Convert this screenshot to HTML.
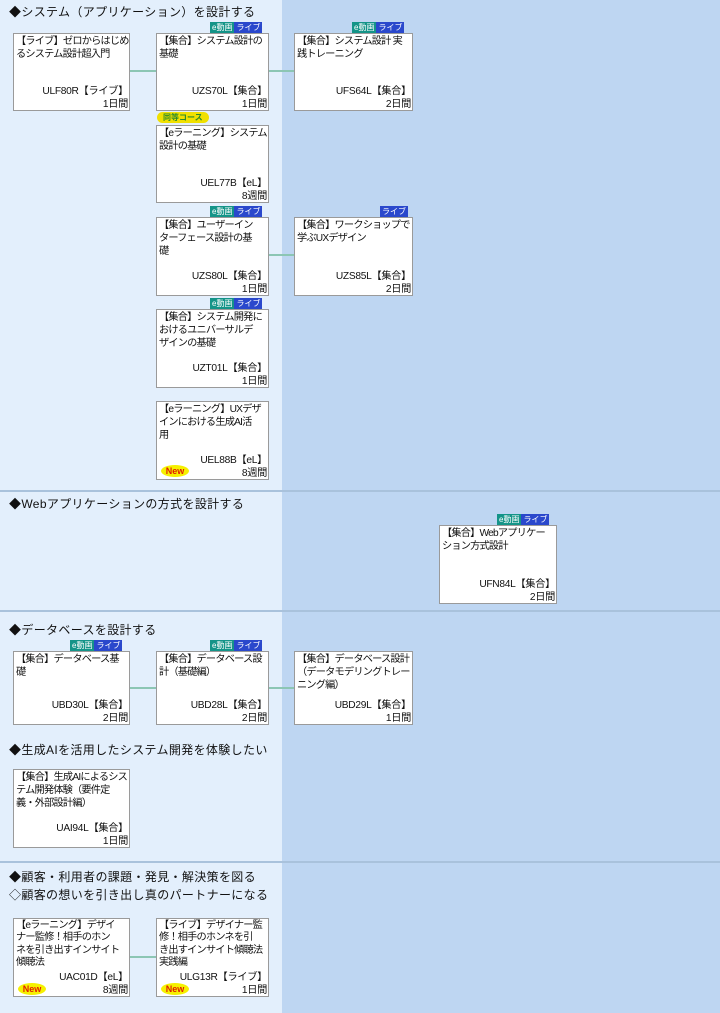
<!DOCTYPE html>
<html><head><meta charset="utf-8"><style>
*{margin:0;padding:0;box-sizing:border-box}
body{width:720px;height:1013px;position:relative;overflow:hidden;background:#bed6f2;font-family:"Liberation Sans","Noto Sans CJK JP",sans-serif;color:#111}
.left{position:absolute;left:0;top:0;width:282px;height:1013px;background:#e3effc}
.hr{position:absolute;left:0;width:720px;height:2px;background:#a9c2dc}
.h{position:absolute;left:9px;font-size:12px;letter-spacing:0.35px;white-space:nowrap;line-height:16px}
.b{position:absolute;background:#fff;border:1px solid #9a9a9a;font-size:10.2px;letter-spacing:-0.8px;line-height:13px;padding:1px 1px 0 2px;white-space:nowrap;overflow:hidden}
.b .c{position:absolute;right:1px;bottom:-1px;text-align:right;line-height:13px;letter-spacing:-0.3px}
.b.t{line-height:12.4px}
.b.t .c{line-height:12.4px}
.bd{position:absolute;height:11px;font-size:8px;line-height:11px;color:#fff;white-space:nowrap;display:flex}
.bd span{padding:0 2px}
.e{background:#149488}.l{background:#2a48cc}
.cn{position:absolute;height:2px;background:#8cc6b4}
.new{position:absolute;width:28px;height:12px;border-radius:50%;background:#f5f000;color:#e02000;font-size:9px;font-weight:bold;line-height:12px;text-align:center}
.pill{position:absolute;background:#f0e000;border-radius:6px;color:#2a8a2a;font-size:8px;line-height:11px;padding:0 6px;font-weight:bold}
</style></head><body>
<div class="left"></div>
<div class="hr" style="top:490px"></div>
<div class="hr" style="top:610px"></div>
<div class="hr" style="top:861px"></div>

<div class="h" style="top:4px">◆システム（アプリケーション）を設計する</div>
<div class="h" style="top:496px">◆Webアプリケーションの方式を設計する</div>
<div class="h" style="top:622px">◆データベースを設計する</div>
<div class="h" style="top:742px">◆生成AIを活用したシステム開発を体験したい</div>
<div class="h" style="top:869px">◆顧客・利用者の課題・発見・解決策を図る</div>
<div class="h" style="top:887px">◇顧客の想いを引き出し真のパートナーになる</div>

<div class="cn" style="left:130px;top:70px;width:26px"></div>
<div class="cn" style="left:268px;top:70px;width:26px"></div>
<div class="cn" style="left:268px;top:254px;width:26px"></div>
<div class="cn" style="left:130px;top:687px;width:26px"></div>
<div class="cn" style="left:268px;top:687px;width:26px"></div>
<div class="cn" style="left:130px;top:956px;width:26px"></div>

<div class="b" style="left:13px;top:33px;width:117px;height:78px">【ライブ】ゼロからはじめ<br>るシステム設計超入門<div class="c">ULF80R【ライブ】<br>1日間</div></div>
<div class="bd" style="left:210px;top:22px"><span class="e">e動画</span><span class="l">ライブ</span></div>
<div class="b" style="left:156px;top:33px;width:113px;height:78px">【集合】システム設計の<br>基礎<div class="c">UZS70L【集合】<br>1日間</div></div>
<div class="bd" style="left:352px;top:22px"><span class="e">e動画</span><span class="l">ライブ</span></div>
<div class="b" style="left:294px;top:33px;width:119px;height:78px">【集合】システム設計 実<br>践トレーニング<div class="c">UFS64L【集合】<br>2日間</div></div>

<div class="pill" style="left:157px;top:112px">同等コース</div>
<div class="b" style="left:156px;top:125px;width:113px;height:78px">【eラーニング】システム<br>設計の基礎<div class="c">UEL77B【eL】<br>8週間</div></div>

<div class="bd" style="left:210px;top:206px"><span class="e">e動画</span><span class="l">ライブ</span></div>
<div class="b" style="left:156px;top:217px;width:113px;height:79px">【集合】ユーザーイン<br>ターフェース設計の基<br>礎<div class="c">UZS80L【集合】<br>1日間</div></div>
<div class="bd" style="left:380px;top:206px"><span class="l">ライブ</span></div>
<div class="b" style="left:294px;top:217px;width:119px;height:79px">【集合】ワークショップで<br>学ぶUXデザイン<div class="c">UZS85L【集合】<br>2日間</div></div>

<div class="bd" style="left:210px;top:298px"><span class="e">e動画</span><span class="l">ライブ</span></div>
<div class="b" style="left:156px;top:309px;width:113px;height:79px">【集合】システム開発に<br>おけるユニバーサルデ<br>ザインの基礎<div class="c">UZT01L【集合】<br>1日間</div></div>

<div class="b" style="left:156px;top:401px;width:113px;height:79px">【eラーニング】UXデザ<br>インにおける生成AI活<br>用<div class="c">UEL88B【eL】<br>8週間</div></div>
<div class="new" style="left:161px;top:465px">New</div>

<div class="bd" style="left:497px;top:514px"><span class="e">e動画</span><span class="l">ライブ</span></div>
<div class="b" style="left:439px;top:525px;width:118px;height:79px">【集合】Webアプリケー<br>ション方式設計<div class="c">UFN84L【集合】<br>2日間</div></div>

<div class="bd" style="left:70px;top:640px"><span class="e">e動画</span><span class="l">ライブ</span></div>
<div class="b" style="left:13px;top:651px;width:117px;height:74px">【集合】データベース基<br>礎<div class="c">UBD30L【集合】<br>2日間</div></div>
<div class="bd" style="left:210px;top:640px"><span class="e">e動画</span><span class="l">ライブ</span></div>
<div class="b" style="left:156px;top:651px;width:113px;height:74px">【集合】データベース設<br>計（基礎編）<div class="c">UBD28L【集合】<br>2日間</div></div>
<div class="b" style="left:294px;top:651px;width:119px;height:74px">【集合】データベース設計<br>（データモデリングトレー<br>ニング編）<div class="c">UBD29L【集合】<br>1日間</div></div>

<div class="b" style="left:13px;top:769px;width:117px;height:79px">【集合】生成AIによるシス<br>テム開発体験（要件定<br>義・外部設計編）<div class="c">UAI94L【集合】<br>1日間</div></div>

<div class="b t" style="left:13px;top:918px;width:117px;height:79px">【eラーニング】デザイ<br>ナー監修！相手のホン<br>ネを引き出すインサイト<br>傾聴法<div class="c">UAC01D【eL】<br>8週間</div></div>
<div class="new" style="left:18px;top:983px">New</div>
<div class="b t" style="left:156px;top:918px;width:113px;height:79px">【ライブ】デザイナー監<br>修！相手のホンネを引<br>き出すインサイト傾聴法<br>実践編<div class="c">ULG13R【ライブ】<br>1日間</div></div>
<div class="new" style="left:161px;top:983px">New</div>
</body></html>
